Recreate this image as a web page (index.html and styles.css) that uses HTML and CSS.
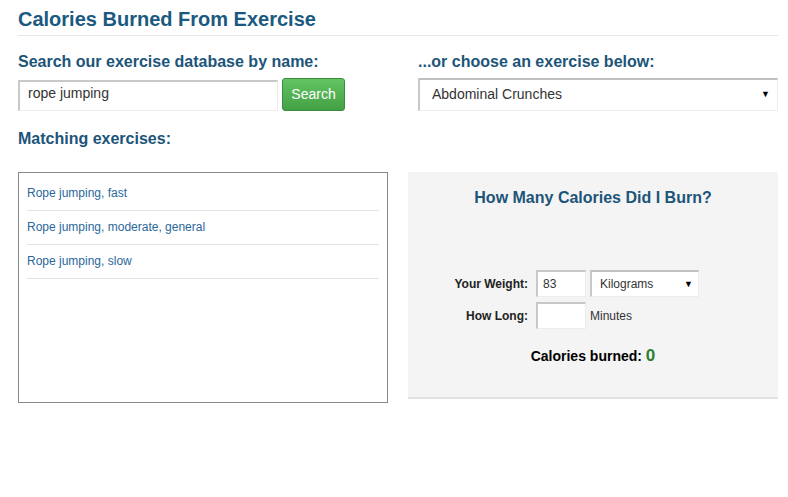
FILE: index.html
```html
<!DOCTYPE html>
<html>
<head>
<meta charset="utf-8">
<link rel="stylesheet" href="styles.css">
</head>
<body>
<div class="page">
  <h1 class="title">Calories Burned From Exercise</h1>
  <div class="top-row">
    <div class="col">
      <h2 class="label">Search our exercise database by name:</h2>
      <div class="search-line">
        <div class="text-input wide">rope jumping</div>
        <div class="btn">Search</div>
      </div>
    </div>
    <div class="col">
      <h2 class="label">...or choose an exercise below:</h2>
      <div class="select big"><span>Abdominal Crunches</span><span class="arrow">▼</span></div>
    </div>
  </div>
  <h2 class="label match">Matching exercises:</h2>
  <div class="bottom-row">
    <div class="list-box">
      <div class="item">Rope jumping, fast</div>
      <div class="item">Rope jumping, moderate, general</div>
      <div class="item">Rope jumping, slow</div>
    </div>
    <div class="panel">
      <h3 class="panel-title">How Many Calories Did I Burn?</h3>
      <div class="form">
        <div class="frow">
          <span class="flabel">Your Weight:</span>
          <div class="text-input small">83</div>
          <div class="select unit"><span>Kilograms</span><span class="arrow">▼</span></div>
        </div>
        <div class="frow">
          <span class="flabel">How Long:</span>
          <div class="text-input small"></div>
          <span class="unit-text">Minutes</span>
        </div>
      </div>
      <div class="result">Calories burned: <span class="num">0</span></div>
    </div>
  </div>
</div>
</body>
</html>
```
FILE: styles.css
```css
body {
  margin: 0;
  background: #fff;
  font-family: "Liberation Sans", Arial, sans-serif;
  color: #333;
}
.page {
  width: 760px;
  padding: 0 10px 0 18px;
}
.title {
  margin: 0;
  padding-top: 8px;
  height: 27px;
  font-size: 20px;
  line-height: 22px;
  font-weight: bold;
  color: #1a5a80;
  border-bottom: 1px solid #e6e6e6;
}
.top-row {
  display: grid;
  grid-template-columns: 380px 360px;
  column-gap: 20px;
  margin-top: 17px;
}
.label {
  margin: 0;
  font-size: 16px;
  line-height: 18px;
  font-weight: bold;
  color: #1c5579;
}
.search-line {
  display: flex;
  align-items: flex-start;
  gap: 4px;
  margin-top: 7px;
}
.text-input {
  box-sizing: border-box;
  background: #fff;
  border-top: 2px solid #c8c8c8;
  border-left: 2px solid #c8c8c8;
  border-right: 1px solid #ececec;
  border-bottom: 1px solid #ececec;
  font-size: 14px;
  color: #333;
}
.text-input.wide {
  width: 260px;
  height: 31px;
  margin-top: 2px;
  padding: 1px 8px;
  line-height: 20px;
}
.btn {
  box-sizing: border-box;
  width: 63px;
  height: 33px;
  border: 1px solid #3d8b3d;
  border-radius: 3px;
  background: linear-gradient(#62c462, #44a044);
  color: #fff;
  font-size: 14px;
  line-height: 31px;
  text-align: center;
}
.select {
  box-sizing: border-box;
  display: flex;
  justify-content: space-between;
  align-items: center;
  background: #fff;
  border-top: 2px solid #c0c0c0;
  border-left: 2px solid #c8c8c8;
  border-right: 1px solid #ececec;
  border-bottom: 1px solid #ececec;
  font-size: 14px;
  color: #333;
}
.select .arrow {
  font-size: 9px;
  color: #000;
}
.select.big {
  margin-top: 7px;
  width: 360px;
  height: 33px;
  padding: 0 7px 2px 12px;
}
.label.match {
  margin-top: 19px;
}
.bottom-row {
  display: grid;
  grid-template-columns: 370px 370px;
  column-gap: 20px;
  margin-top: 24px;
}
.list-box {
  box-sizing: border-box;
  height: 231px;
  border: 1px solid #888;
  padding: 4px 8px 0;
}
.item {
  font-size: 12px;
  color: #2b679b;
  height: 33px;
  line-height: 32px;
  border-bottom: 1px solid #e3e3e3;
}
.panel {
  box-sizing: border-box;
  height: 227px;
  background: #f4f4f4;
  border-bottom: 2px solid #e2e2e2;
  padding-top: 17px;
}
.panel-title {
  margin: 0;
  text-align: center;
  font-size: 16px;
  line-height: 18px;
  font-weight: bold;
  color: #1c5579;
}
.form {
  margin-top: 63px;
  display: flex;
  flex-direction: column;
  gap: 5px;
}
.frow {
  display: flex;
  align-items: center;
  height: 27px;
}
.flabel {
  box-sizing: border-box;
  width: 128px;
  text-align: right;
  padding-right: 8px;
  font-size: 12px;
  font-weight: bold;
  color: #222;
}
.text-input.small {
  width: 50px;
  height: 27px;
  padding: 0 5px;
  font-size: 12px;
  line-height: 24px;
}
.select.unit {
  margin-left: 4px;
  width: 109px;
  height: 27px;
  padding: 0 5px 1px 8px;
  font-size: 12px;
}
.unit-text {
  margin-left: 4px;
  font-size: 12px;
  color: #333;
}
.result {
  margin-top: 17px;
  text-align: center;
  font-size: 14px;
  font-weight: bold;
  color: #000;
}
.result .num {
  font-size: 17px;
  color: #2e7d32;
}
```
